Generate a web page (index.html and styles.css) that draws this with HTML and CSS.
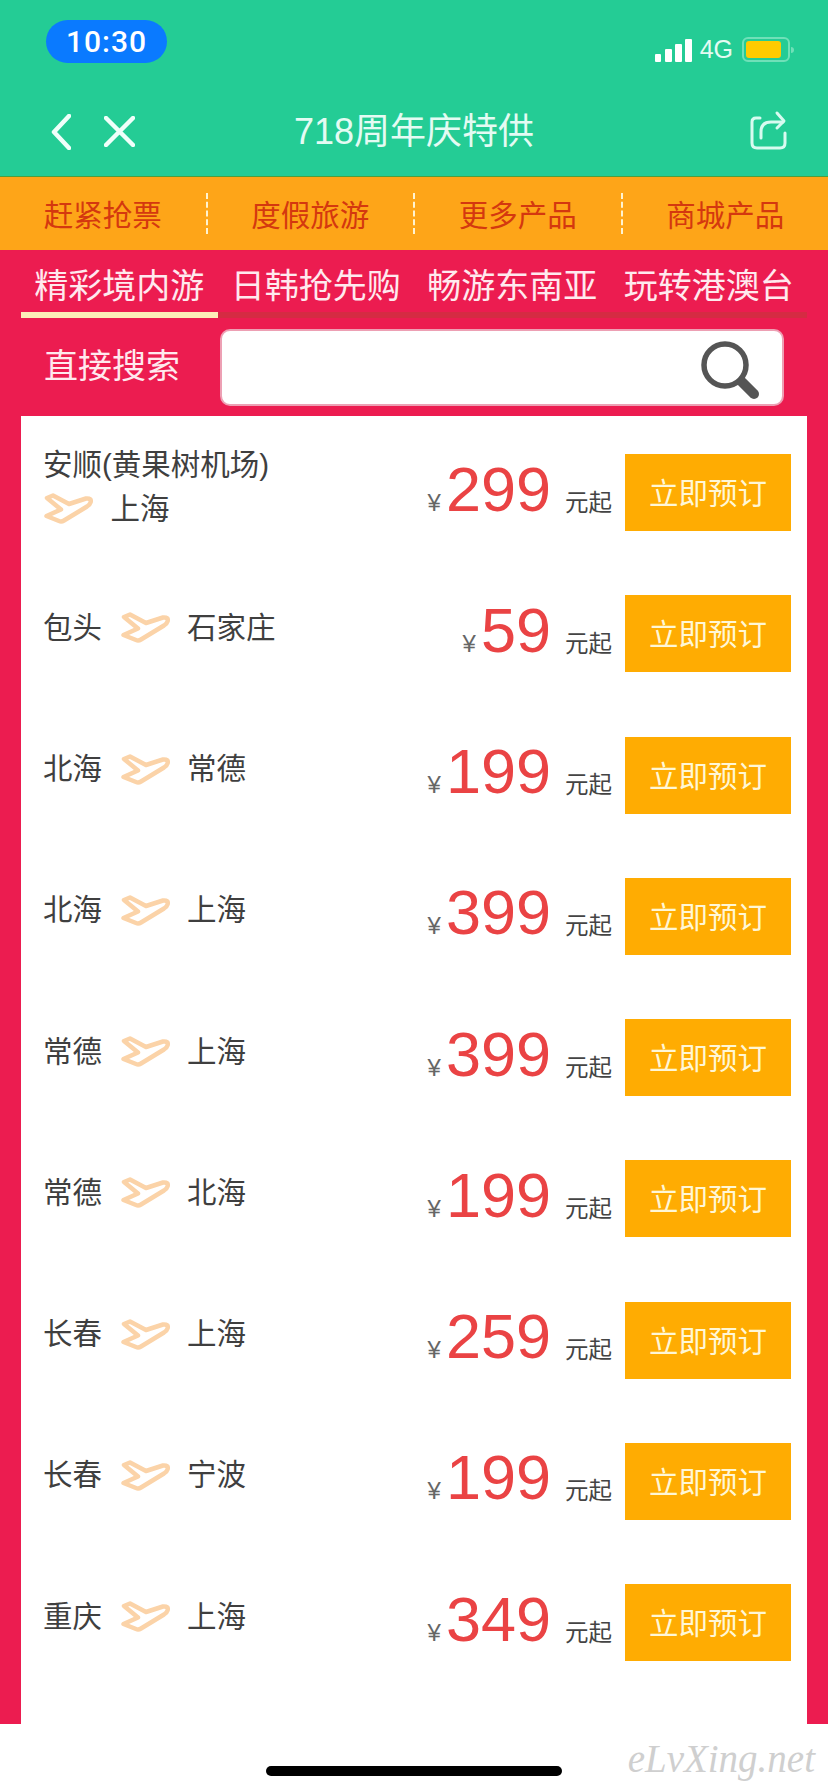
FILE: index.html
```html
<!DOCTYPE html>
<html lang="zh-CN">
  <head>
    <meta charset="UTF-8" />
    <meta name="viewport" content="width=device-width, initial-scale=1.0" />
    <title>718周年庆特供</title>
    <link rel="stylesheet" href="styles.css">
  </head>
  <body>
    <svg class="defs" width="0" height="0">
      <symbol id="plane" viewBox="0 0 50 31">
        <path d="M4 5 L10 2.5 L26 11 L43 5.5 Q49 5 47.5 9.5 Q47 11.5 44 13.5 L21 27.5 Q18.5 29 16 28 L3.5 23 L18 16.5 Z" />
      </symbol>
    </svg>

    <header class="top">
      <div class="status">
        <div class="time">10:30</div>
        <div class="status-right">
          <svg class="signal" width="37" height="23" viewBox="0 0 37 23">
            <rect x="0" y="15" width="6" height="8" rx="1" />
            <rect x="10" y="10" width="7" height="13" rx="1" />
            <rect x="20" y="5" width="7" height="18" rx="1" />
            <rect x="30" y="0" width="7" height="23" rx="1" />
          </svg>
          <span class="net">4G</span>
          <div class="battery"><div class="battery-fill"></div></div>
          <div class="battery-nub"></div>
        </div>
      </div>
      <nav class="nav">
        <div class="nav-left">
          <svg width="20" height="36" viewBox="0 0 20 36" class="nav-icon">
            <path d="M18 2 L3 18 L18 34" />
          </svg>
          <svg width="31" height="31" viewBox="0 0 31 31" class="nav-icon">
            <path d="M2 2 L29 29 M29 2 L2 29" />
          </svg>
        </div>
        <h1 class="title">718周年庆特供</h1>
        <div class="nav-right">
          <svg width="44" height="44" viewBox="0 0 44 44" class="share">
            <path d="M15 8 H11 Q7 8 7 12 V33 Q7 38 12 38 H35 Q40 38 40 33 V23" />
            <path d="M16 28 V22 Q16 12 26 12 H38" />
            <path d="M32 3 L39 11 L32 18" />
          </svg>
        </div>
      </nav>
    </header>

    <div class="cats">
      <div class="cat">赶紧抢票</div>
      <div class="cat">度假旅游</div>
      <div class="cat">更多产品</div>
      <div class="cat">商城产品</div>
    </div>

    <main class="main">
      <div class="tabs">
        <div class="tab active">精彩境内游</div>
        <div class="tab">日韩抢先购</div>
        <div class="tab">畅游东南亚</div>
        <div class="tab">玩转港澳台</div>
      </div>

      <div class="search">
        <label class="search-label" for="q">直接搜索</label>
        <div class="search-box">
          <input type="text" id="q" class="search-input" />
          <svg width="62" height="62" viewBox="0 0 62 62" class="search-icon">
            <circle cx="25" cy="25" r="21" />
            <path class="handle" d="M42 42 L54 54" />
          </svg>
        </div>
      </div>

      <div class="list">
        <div class="row">
          <div class="route">
            <span class="city-long">安顺(黄果树机场)</span>
            <svg class="plane"><use href="#plane" /></svg>
            <span>上海</span>
          </div>
          <div class="price"><span class="yen">¥</span><span class="num">299</span><span class="unit">元起</span></div>
          <button class="book">立即预订</button>
        </div>
        <div class="row">
          <div class="route"><span>包头</span><svg class="plane"><use href="#plane" /></svg><span>石家庄</span></div>
          <div class="price"><span class="yen">¥</span><span class="num">59</span><span class="unit">元起</span></div>
          <button class="book">立即预订</button>
        </div>
        <div class="row">
          <div class="route"><span>北海</span><svg class="plane"><use href="#plane" /></svg><span>常德</span></div>
          <div class="price"><span class="yen">¥</span><span class="num">199</span><span class="unit">元起</span></div>
          <button class="book">立即预订</button>
        </div>
        <div class="row">
          <div class="route"><span>北海</span><svg class="plane"><use href="#plane" /></svg><span>上海</span></div>
          <div class="price"><span class="yen">¥</span><span class="num">399</span><span class="unit">元起</span></div>
          <button class="book">立即预订</button>
        </div>
        <div class="row">
          <div class="route"><span>常德</span><svg class="plane"><use href="#plane" /></svg><span>上海</span></div>
          <div class="price"><span class="yen">¥</span><span class="num">399</span><span class="unit">元起</span></div>
          <button class="book">立即预订</button>
        </div>
        <div class="row">
          <div class="route"><span>常德</span><svg class="plane"><use href="#plane" /></svg><span>北海</span></div>
          <div class="price"><span class="yen">¥</span><span class="num">199</span><span class="unit">元起</span></div>
          <button class="book">立即预订</button>
        </div>
        <div class="row">
          <div class="route"><span>长春</span><svg class="plane"><use href="#plane" /></svg><span>上海</span></div>
          <div class="price"><span class="yen">¥</span><span class="num">259</span><span class="unit">元起</span></div>
          <button class="book">立即预订</button>
        </div>
        <div class="row">
          <div class="route"><span>长春</span><svg class="plane"><use href="#plane" /></svg><span>宁波</span></div>
          <div class="price"><span class="yen">¥</span><span class="num">199</span><span class="unit">元起</span></div>
          <button class="book">立即预订</button>
        </div>
        <div class="row">
          <div class="route"><span>重庆</span><svg class="plane"><use href="#plane" /></svg><span>上海</span></div>
          <div class="price"><span class="yen">¥</span><span class="num">349</span><span class="unit">元起</span></div>
          <button class="book">立即预订</button>
        </div>
      </div>
    </main>

    <footer class="foot">
      <div class="home-bar"></div>
      <div class="watermark">eLvXing.net</div>
    </footer>
  </body>
</html>
```

FILE: styles.css
```css
* {
  box-sizing: border-box;
  margin: 0;
  padding: 0;
}

body {
  width: 828px;
  height: 1792px;
  overflow: hidden;
  background-color: #fff;
  font-family: "Liberation Sans", "Noto Sans CJK SC", sans-serif;
}

.defs {
  display: block;
}

.top {
  height: 177px;
  background-color: #24cc95;
  border-bottom: 1px solid #4f9e3c;
}

.status {
  height: 87px;
  display: flex;
  justify-content: space-between;
  padding: 20px 34px 0 46px;
}

.time {
  width: 121px;
  height: 43px;
  line-height: 43px;
  text-align: center;
  border-radius: 22px;
  background-color: #0a7aff;
  color: #fff;
  font-family: Roboto, sans-serif;
  font-size: 30px;
  font-weight: 500;
  letter-spacing: 1px;
}

.status-right {
  display: flex;
  align-items: center;
  height: 25px;
  margin-top: 17px;
}

.signal {
  fill: #fff;
  margin-top: 1px;
}

.net {
  margin-left: 8px;
  color: #e4fbf3;
  font-size: 25px;
}

.battery {
  width: 48px;
  height: 25px;
  margin-left: 9px;
  padding: 2px;
  border: 2px solid #6fe0b8;
  border-radius: 6px;
}

.battery-fill {
  width: 35px;
  height: 17px;
  background-color: #fecb00;
  border-radius: 3px;
}

.battery-nub {
  width: 3px;
  height: 6px;
  margin-left: 1px;
  background-color: #6fe0b8;
  border-radius: 0 3px 3px 0;
}

.nav {
  height: 89px;
  display: grid;
  grid-template-columns: 1fr auto 1fr;
  align-items: center;
  padding: 0 39px;
}

.nav-left {
  display: flex;
  align-items: center;
  gap: 33px;
  margin-left: 12px;
}

.nav-icon {
  fill: none;
  stroke: #f0fffa;
  stroke-width: 4.5;
  stroke-linecap: round;
  stroke-linejoin: round;
}

.title {
  color: #e4fbf3;
  font-size: 36px;
  font-weight: normal;
  line-height: 44px;
}

.nav-right {
  display: flex;
  justify-content: flex-end;
}

.share {
  fill: none;
  stroke: #d8fbf0;
  stroke-width: 3;
  stroke-linecap: round;
  stroke-linejoin: round;
}

.cats {
  height: 73px;
  display: flex;
  padding: 16px 0;
  background-color: #fea518;
}

.cat {
  flex: 1;
  height: 41px;
  padding-top: 2px;
  line-height: 41px;
  text-align: center;
  color: #d4380f;
  font-size: 29.5px;
}

.cat + .cat {
  border-left: 2px dashed #fff3d0;
}

.main {
  height: 1474px;
  background-color: #ec1c50;
  padding: 0 21px;
}

.tabs {
  display: flex;
}

.tab {
  flex: 1;
  height: 68px;
  padding-top: 15px;
  line-height: 42px;
  text-align: center;
  color: #ffe9ee;
  font-size: 34px;
  border-bottom: 6px solid #d52b43;
}

.tab.active {
  border-bottom-color: #fdeeb8;
}

.search {
  display: flex;
  align-items: center;
  margin-top: 11px;
  padding-left: 23px;
}

.search-label {
  width: 176px;
  margin-bottom: 8px;
  color: #ffe9ee;
  font-size: 34px;
}

.search-box {
  position: relative;
  width: 564px;
  height: 77px;
}

.search-input {
  display: block;
  width: 100%;
  height: 100%;
  border: 2px solid #eda0b4;
  border-radius: 10px;
  background-color: #fff;
}

.search-icon {
  position: absolute;
  top: 11px;
  right: 22px;
  fill: none;
  stroke: #555;
  stroke-width: 5.5;
}

.search-icon .handle {
  stroke-width: 10;
  stroke-linecap: round;
}

.list {
  height: 1308px;
  margin-top: 10px;
  background-color: #fff;
}

.row {
  height: 141.25px;
  display: flex;
  align-items: center;
  padding: 0 16px 0 22px;
}

.route {
  flex: 1;
  display: flex;
  flex-wrap: wrap;
  align-items: center;
  column-gap: 17.5px;
  row-gap: 10px;
  color: #3f3f3f;
  font-size: 29.5px;
  line-height: 34px;
}

.city-long {
  flex-basis: 100%;
}

.plane {
  width: 50px;
  height: 31px;
  fill: none;
  stroke: #fbd3a8;
  stroke-width: 4.5;
  stroke-linejoin: round;
  overflow: visible;
}

.price {
  display: flex;
  align-items: baseline;
  margin-top: 4px;
}

.yen {
  color: #666;
  font-size: 24px;
  margin-right: 5px;
}

.num {
  color: #ea4344;
  font-size: 63px;
  line-height: 70px;
}

.unit {
  margin-left: 14px;
  color: #444;
  font-size: 23.5px;
}

.book {
  width: 166px;
  height: 77px;
  margin: 12px 0 0 13px;
  padding-bottom: 3px;
  border: none;
  background-color: #ffac02;
  color: #fff7d6;
  font-family: inherit;
  font-size: 29.5px;
}

.foot {
  height: 68px;
  position: relative;
}

.home-bar {
  position: absolute;
  left: 266px;
  top: 42px;
  width: 296px;
  height: 10px;
  border-radius: 5px;
  background-color: #000;
}

.watermark {
  position: absolute;
  right: 13px;
  top: 12px;
  color: #cfcfcf;
  font-family: "Liberation Serif", serif;
  font-size: 39px;
  font-style: italic;
}
```
